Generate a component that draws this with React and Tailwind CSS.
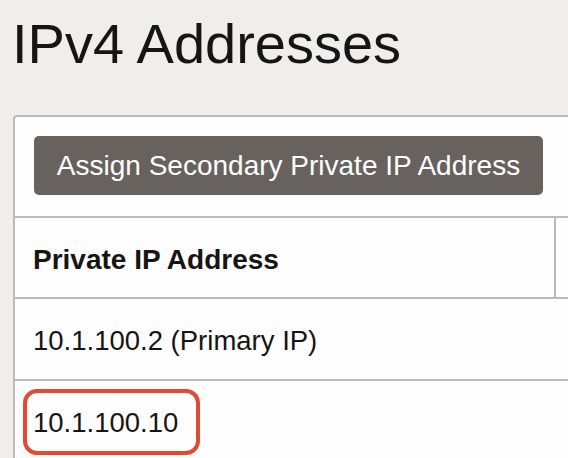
const rows = [
  { ip: "10.1.100.2 (Primary IP)" },
  { ip: "10.1.100.10", marked: true },
];

const App = () => {
  return (
    <div
      className="min-h-[458px] w-[568px] overflow-hidden bg-[#efeeec] text-[#161513]"
      style={{ fontFamily: '"Liberation Sans", Arial, sans-serif' }}
    >
      {/* ── Title ── */}
      <h1 className="pl-[12px] pt-[16px] text-[56px] leading-[56px] font-normal">
        IPv4 Addresses
      </h1>

      {/* ── Panel ── */}
      <div className="ml-[13px] mt-[43px] w-[620px] rounded-[4px] border-2 border-[#bdbbb9] bg-[#fdfdfd]">
        <div className="px-[19px] pt-[19px] pb-[21px]">
          <button
            type="button"
            className="flex h-[59px] w-[509px] items-center justify-center rounded-[5px] bg-[#67625e] text-[28px] text-white"
          >
            Assign Secondary Private IP Address
          </button>
        </div>

        {/* header */}
        <div className="flex border-t-2 border-b-2 border-[#bdbbb9]">
          <div className="flex h-[79px] w-[541px] items-center border-r-2 border-[#bdbbb9] pl-[18px] pt-[4px] text-[28px] font-bold leading-[28px]">
            Private IP Address
          </div>
          <div className="flex-1" />
        </div>

        {/* rows */}
        {rows.map((row) => (
          <div
            key={row.ip}
            className="flex h-[82px] items-center border-b-2 border-[#bdbbb9] pl-[18px] pt-[4px] text-[27.5px] leading-[28px]"
          >
            {row.marked ? (
              <span className="relative">
                {row.ip}
                <span className="absolute -top-[20px] -bottom-[18px] -left-[10px] -right-[22px] rounded-[14px] border-4 border-[#e04b31]" />
              </span>
            ) : (
              row.ip
            )}
          </div>
        ))}
      </div>
    </div>
  );
};

export default App;
